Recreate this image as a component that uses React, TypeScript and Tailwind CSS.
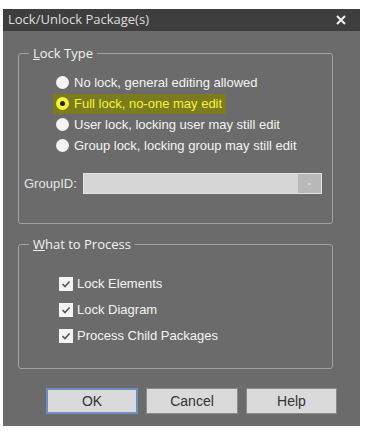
import React from 'react';

const radios = [
    'No lock, general editing allowed',
    'Full lock, no-one may edit',
    'User lock, locking user may still edit',
    'Group lock, locking group may still edit',
];

const checks = ['Lock Elements', 'Lock Diagram', 'Process Child Packages'];

const Radio: React.FC<{ checked?: boolean }> = ({ checked }) =>
    checked ? (
        <span className="w-[13px] h-[13px] rounded-full bg-[#f5f536] flex items-center justify-center">
            <span className="w-[5px] h-[5px] rounded-full bg-[#222]" />
        </span>
    ) : (
        <span className="w-[13px] h-[13px] rounded-full bg-[#f4f4f4]" />
    );

const Check: React.FC = () => (
    <span className="w-[14px] h-[14px] bg-[#f4f4f4] flex items-center justify-center">
        <svg width="10" height="8" viewBox="0 0 10 8">
            <path d="M1.5 4 L4 6.5 L8.5 1.5" fill="none" stroke="#555" strokeWidth="1.6" />
        </svg>
    </span>
);

const Btn: React.FC<{ label: string; primary?: boolean; w: string }> = ({ label, primary, w }) => (
    <button
        className={`${w} h-[26px] bg-[#dadada] text-[#333] text-[14px] ${
            primary ? 'border-2 border-[#6b8fc4]' : 'border border-[#8a8a8a]'
        }`}
    >
        {label}
    </button>
);

export default function App() {
    return (
        <div className="w-[367px] h-[431px] bg-white overflow-hidden" style={{ fontFamily: '"Liberation Sans", Arial, sans-serif' }}>
            <div className="h-[9px]" />
            <div className="ml-[3px] w-[357px]">
                {/* title bar */}
                <div className="h-[22px] bg-[#3e3e3e] flex items-center justify-between pl-[5px] pr-[14px]">
                    <span className="text-[13px] text-[#dedede]" style={{ fontFamily: '"Open Sans", sans-serif' }}>
                        Lock/Unlock Package(s)
                    </span>
                    <svg width="10" height="10" viewBox="0 0 10 10">
                        <path d="M1 1 L9 9 M9 1 L1 9" stroke="#f2f2f2" strokeWidth="2" />
                    </svg>
                </div>

                {/* body */}
                <div className="h-[395px] bg-[#6b6b6b] pt-[14px] pl-[15px]">
                    <fieldset className="w-[315px] h-[179px] border border-[#a2a2a2] rounded-[3px]">
                        <legend
                            className="ml-[10px] px-[4px] text-[13px] leading-[16px] text-[#f2f2f2]"
                            style={{ fontFamily: '"Open Sans", sans-serif' }}
                        >
                            <span className="underline">L</span>ock Type
                        </legend>
                        <div className="pt-[11px] pl-[37px]">
                            {radios.map((r, i) => (
                                <div key={r} className="h-[21px] flex items-center">
                                    {i === 1 ? (
                                        <div className="flex items-center gap-[5px] bg-[#7c7c1e] h-[20px] -ml-[3px] pl-[3px] pr-[4px] rounded-[2px]">
                                            <Radio checked />
                                            <span className="text-[13px] text-[#f4f43a]">{r}</span>
                                        </div>
                                    ) : (
                                        <div className="flex items-center gap-[5px]">
                                            <Radio />
                                            <span className="text-[13px] text-[#f4f4f4]">{r}</span>
                                        </div>
                                    )}
                                </div>
                            ))}
                        </div>
                        <div className="mt-[17px] pl-[5px] flex items-center">
                            <span className="w-[59px] text-[13px] text-[#e6e6e6]">GroupID:</span>
                            <div className="w-[239px] h-[21px] bg-[#d6d6d6] border border-[#e4e4e4] flex justify-end">
                                <div className="w-[23px] h-full bg-[#b8b8b8] flex items-center justify-center">
                                    <span className="w-[3px] h-[2px] bg-[#d0d0d0]" />
                                </div>
                            </div>
                        </div>
                    </fieldset>

                    <fieldset className="mt-[12px] w-[315px] h-[133px] border border-[#a2a2a2] rounded-[3px]">
                        <legend
                            className="ml-[10px] px-[4px] text-[13px] leading-[16px] text-[#f2f2f2]"
                            style={{ fontFamily: '"Open Sans", sans-serif' }}
                        >
                            <span className="underline">W</span>hat to Process
                        </legend>
                        <div className="pt-[18px] pl-[40px]">
                            {checks.map((c, i) => (
                                <div key={c} className={`${i === 0 ? 'h-[27px]' : 'h-[26px]'} flex items-center gap-[4px]`}>
                                    <Check />
                                    <span className="text-[13px] text-[#f4f4f4]">{c}</span>
                                </div>
                            ))}
                        </div>
                    </fieldset>

                    <div className="mt-[19px] pl-[28px] flex gap-[8px]">
                        <Btn label="OK" primary w="w-[92px]" />
                        <Btn label="Cancel" w="w-[92px]" />
                        <Btn label="Help" w="w-[91px]" />
                    </div>
                </div>
            </div>
        </div>
    );
}
